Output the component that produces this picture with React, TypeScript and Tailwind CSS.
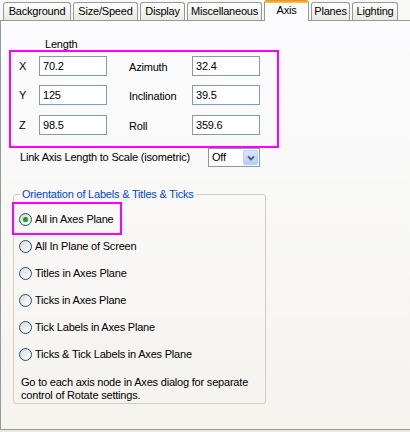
import React from "react";

const tabs = [
  { label: "Background", w: "w-[68px]" },
  { label: "Size/Speed", w: "w-[65px]" },
  { label: "Display", w: "w-[45px]" },
  { label: "Miscellaneous", w: "w-[75px]" },
  { label: "Axis", w: "w-[45px]", active: true },
  { label: "Planes", w: "w-[39px]" },
  { label: "Lighting", w: "w-[46px]" },
];

const rows = [
  { axis: "X", len: "70.2", name: "Azimuth", val: "32.4", mt: "" },
  { axis: "Y", len: "125", name: "Inclination", val: "39.5", mt: "mt-[9px]" },
  { axis: "Z", len: "98.5", name: "Roll", val: "359.6", mt: "mt-[10px]" },
];

const options = [
  "All in Axes Plane",
  "All In Plane of Screen",
  "Titles in Axes Plane",
  "Ticks in Axes Plane",
  "Tick Labels in Axes Plane",
  "Ticks & Tick Labels in Axes Plane",
];

function Field({ value }: { value: string }) {
  return (
    <div className="w-[68px] h-[20px] border border-[#7f9db9] bg-white pl-[3px] leading-[18px] text-black">
      {value}
    </div>
  );
}

function Radio({ checked }: { checked?: boolean }) {
  return (
    <div className="w-[13px] h-[13px] rounded-full border border-[#1c5180] bg-linear-to-br from-[#dcdbd5] to-white flex items-center justify-center">
      {checked && (
        <div className="w-[5px] h-[5px] rounded-full bg-[#21a121] shadow-[0_0_1px_#5fd35f]" />
      )}
    </div>
  );
}

export default function App() {
  return (
    <div
      className="w-[410px] h-[432px] bg-[#ece9d8] overflow-hidden text-[11px] tracking-[-0.2px] text-black"
      style={{ fontFamily: '"Liberation Sans", Arial, sans-serif' }}
    >
      {/* tab strip */}
      <div className="h-[21px] flex items-end gap-[2px] pl-[3px] border-b border-[#919b9c] bg-[#f8f8f5]">
        {tabs.map((t) =>
          t.active ? (
            <div
              key={t.label}
              className={`${t.w} h-[21px] -mb-px relative z-10 bg-[#fcfcfe] border-x border-[#919b9c] rounded-t-[3px] overflow-hidden flex flex-col`}
            >
              <div className="h-[3px] bg-linear-to-b from-[#e68b2c] to-[#ffc73c]" />
              <div className="text-center leading-[13px] pt-[1px]">{t.label}</div>
            </div>
          ) : (
            <div
              key={t.label}
              className={`${t.w} h-[18px] border-t border-x border-[#919b9c] rounded-t-[3px] bg-linear-to-b from-white to-[#e9e8e1] text-center leading-[17px]`}
            >
              {t.label}
            </div>
          )
        )}
      </div>

      {/* tab page */}
      <div className="h-[409px] border-l border-b border-[#919b9c] bg-linear-to-b from-[#fcfcfe] to-[#f4f3ee] flex flex-col">
        <div className="mt-[17px] ml-[44px] h-[12px] leading-[12px]">Length</div>

        <div className="ml-[8px] w-[270px] h-[98px] border-2 border-[#ff00ff] pt-[4px] pl-[8px]">
          {rows.map((r) => (
            <div key={r.axis} className={`flex items-center h-[20px] ${r.mt}`}>
              <span className="w-[20px]">{r.axis}</span>
              <Field value={r.len} />
              <span className="ml-[22px] w-[63px] pt-[2px]">{r.name}</span>
              <Field value={r.val} />
            </div>
          ))}
        </div>

        <div className="flex items-center h-[19px] pl-[19px]">
          <span className="w-[188px]">Link Axis Length to Scale (isometric)</span>
          <div className="w-[52px] h-[19px] border border-[#7f9db9] bg-white flex items-center">
            <span className="flex-1 pl-[3px]">Off</span>
            <div className="w-[15px] h-[15px] mr-[1px] rounded-[2px] border border-[#b9cdf5] bg-linear-to-b from-[#dbe6fe] to-[#b6cbf7] flex items-center justify-center">
              <svg width="8" height="6" viewBox="0 0 8 6">
                <path d="M1 1.5 L4 4.5 L7 1.5" fill="none" stroke="#4d6185" strokeWidth="1.8" />
              </svg>
            </div>
          </div>
        </div>

        <fieldset className="relative mt-[21px] ml-[12px] w-[253px] border border-[#d0d0bf] rounded-[3px] p-0">
          <legend className="ml-[6px] px-[2px] leading-[13px] text-[#0046d5]">
            Orientation of Labels &amp; Titles &amp; Ticks
          </legend>
          <div className="pt-[5px] pl-[5px] pb-[1px]">
            {options.map((o, i) => (
              <div key={o} className="h-[27px] flex items-center gap-[3px]">
                <Radio checked={i === 0} />
                <span>{o}</span>
              </div>
            ))}
            <p className="mt-[8px] pl-[2px] leading-[13px]">
              Go to each axis node in Axes dialog for separate
              <br />
              control of Rotate settings.
            </p>
          </div>
          {/* highlight annotation */}
          <div className="absolute left-[-2px] top-[1px] w-[110px] h-[33px] border-2 border-[#ff00ff] pointer-events-none" />
        </fieldset>
      </div>
    </div>
  );
}
